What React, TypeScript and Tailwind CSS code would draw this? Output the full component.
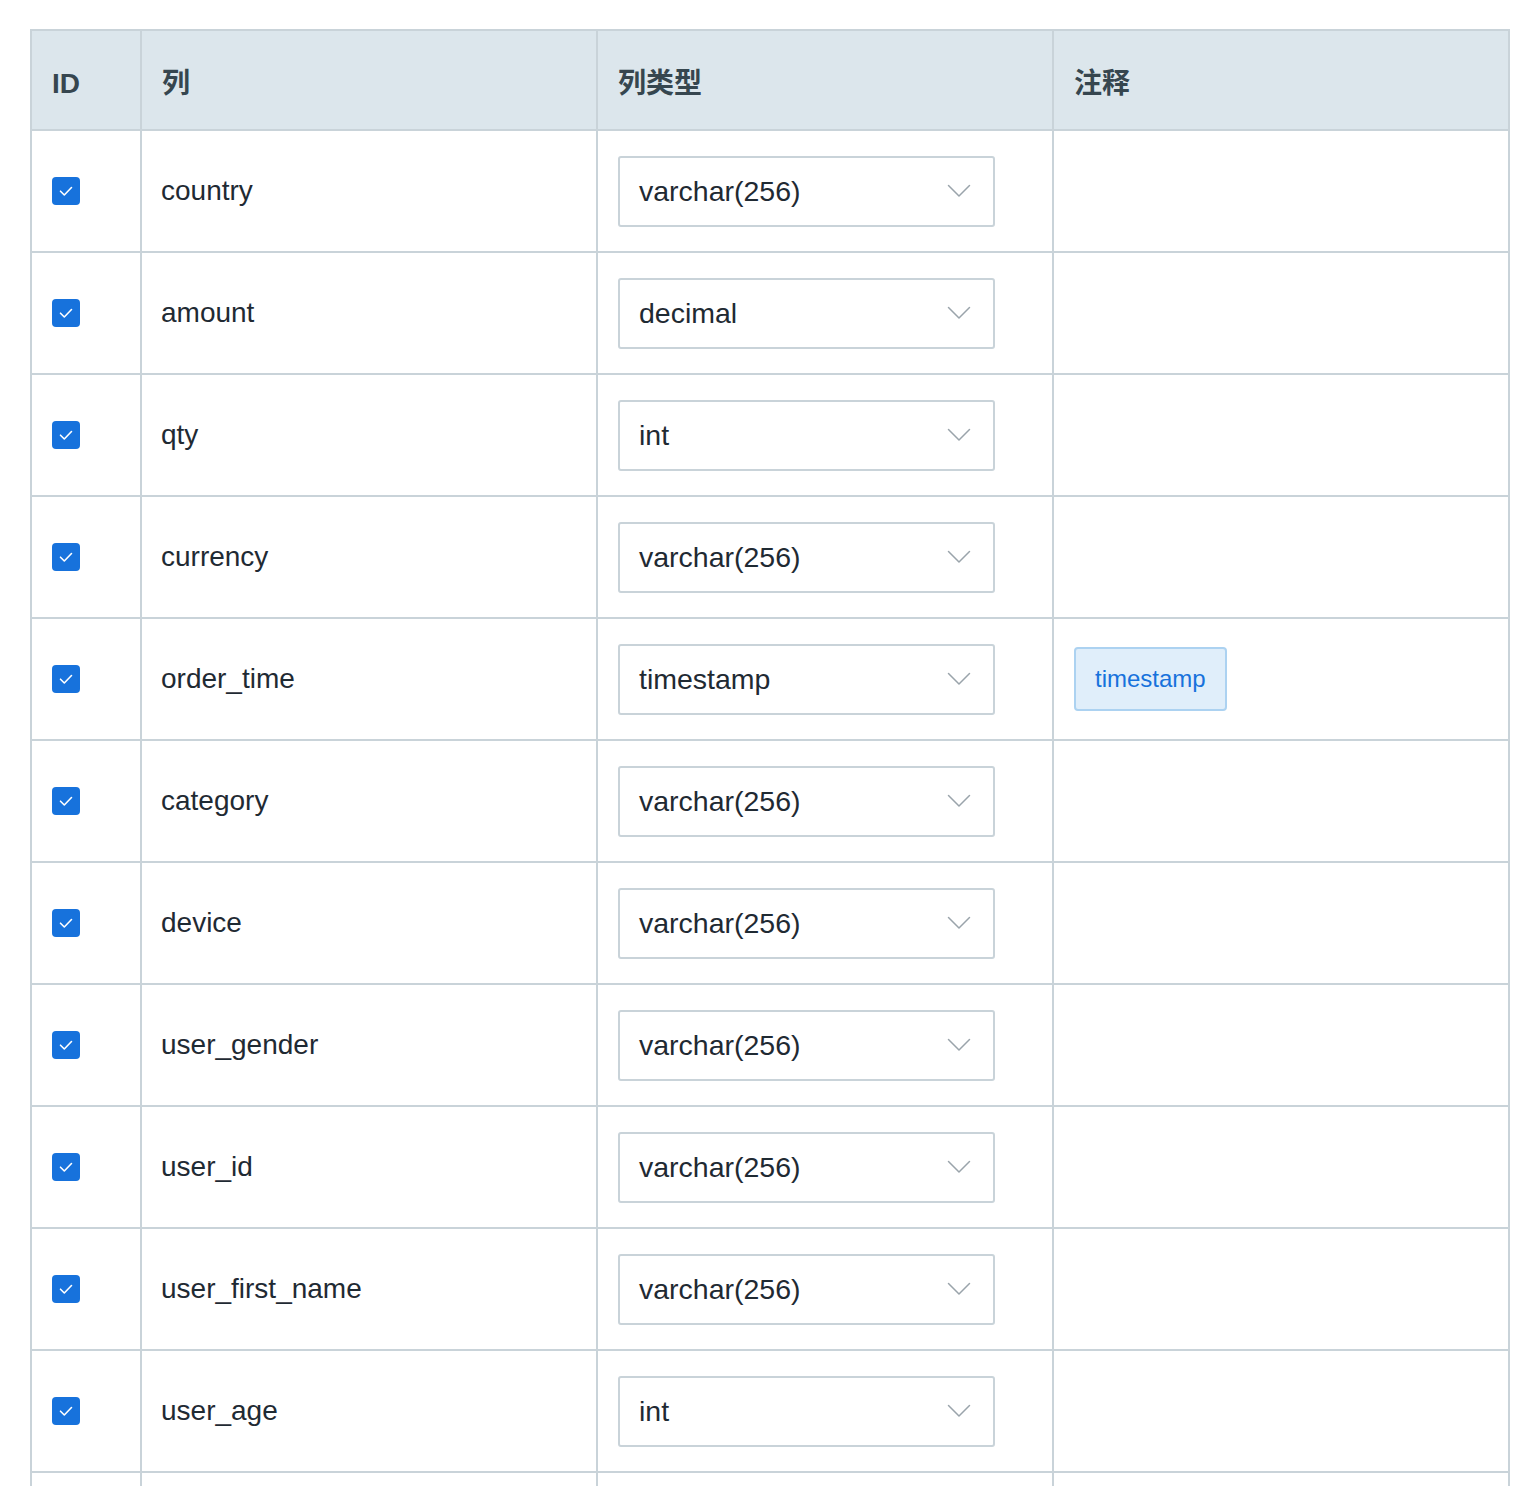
const rows: { name: string; type: string; note?: string }[] = [
  { name: 'country', type: 'varchar(256)' },
  { name: 'amount', type: 'decimal' },
  { name: 'qty', type: 'int' },
  { name: 'currency', type: 'varchar(256)' },
  { name: 'order_time', type: 'timestamp', note: 'timestamp' },
  { name: 'category', type: 'varchar(256)' },
  { name: 'device', type: 'varchar(256)' },
  { name: 'user_gender', type: 'varchar(256)' },
  { name: 'user_id', type: 'varchar(256)' },
  { name: 'user_first_name', type: 'varchar(256)' },
  { name: 'user_age', type: 'int' },
];

function Checkbox() {
  return (
    <span className="flex h-[28px] w-[28px] items-center justify-center rounded-[4px] bg-[#1772dc]">
      <svg width="18" height="18" viewBox="0 0 18 18" fill="none">
        <path d="M3.5 9.2 L7.3 13 L14.5 5.5" stroke="white" strokeWidth="1.6" strokeLinecap="round" strokeLinejoin="round" />
      </svg>
    </span>
  );
}

function TypeSelect({ value }: { value: string }) {
  return (
    <div className="flex h-[71px] w-[377px] items-center justify-between rounded-[3px] border-2 border-[#c9d3d9] bg-white pl-[19px] pr-[22px]">
      <span className="text-[28.5px] text-[#1f2a33]">{value}</span>
      <svg width="24" height="14" viewBox="0 0 24 14" fill="none">
        <path d="M1.5 1.5 L12 12 L22.5 1.5" stroke="#9aa4ab" strokeWidth="1.5" strokeLinecap="round" strokeLinejoin="round" />
      </svg>
    </div>
  );
}

export default function App() {
  return (
    <div
      className="min-h-screen bg-white pl-[30px] pt-[29px]"
      style={{ fontFamily: '"Liberation Sans", "Noto Sans CJK SC", sans-serif' }}
    >
      <table className="w-[1478px] table-fixed border-collapse border-2 border-[#c9d3d9]">
        <colgroup>
          <col className="w-[110px]" />
          <col className="w-[456px]" />
          <col className="w-[456px]" />
          <col className="w-[456px]" />
        </colgroup>
        <thead>
          <tr className="h-[100px] bg-[#dce6ec]">
            {['ID', '列', '列类型', '注释'].map((h) => (
              <th
                key={h}
                className="border-2 border-[#c9d3d9] pl-[20px] pt-[7px] text-left text-[28px] font-bold text-[#36464f]"
              >
                {h}
              </th>
            ))}
          </tr>
        </thead>
        <tbody>
          {rows.map((row) => (
            <tr key={row.name} className="h-[122px]">
              <td className="border-2 border-[#c9d3d9] pl-[20px] align-middle">
                <Checkbox />
              </td>
              <td className="border-2 border-[#c9d3d9] pl-[19px] align-middle text-[28px] text-[#1f2a33]">
                {row.name}
              </td>
              <td className="border-2 border-[#c9d3d9] pl-[20px] align-middle">
                <TypeSelect value={row.type} />
              </td>
              <td className="border-2 border-[#c9d3d9] pl-[20px] align-middle">
                {row.note && (
                  <span className="inline-flex h-[64px] items-center rounded-[4px] border-2 border-[#acd2f1] bg-[#e0eefa] px-[19px] text-[24px] text-[#1772dc]">
                    {row.note}
                  </span>
                )}
              </td>
            </tr>
          ))}
          <tr className="h-[122px]">
            <td className="border-2 border-[#c9d3d9]" />
            <td className="border-2 border-[#c9d3d9]" />
            <td className="border-2 border-[#c9d3d9]" />
            <td className="border-2 border-[#c9d3d9]" />
          </tr>
        </tbody>
      </table>
    </div>
  );
}
